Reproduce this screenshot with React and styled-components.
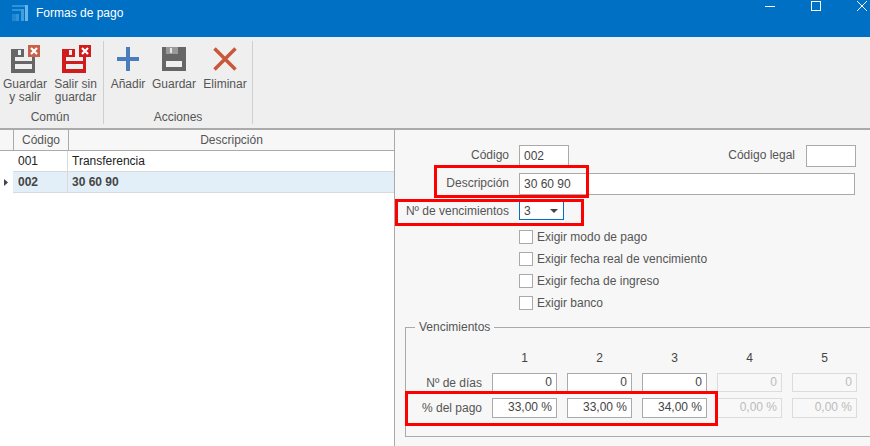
import React from "react";
import styled, { createGlobalStyle } from "styled-components";

const GlobalStyle = createGlobalStyle`
  html, body {
    margin: 0;
    padding: 0;
    overflow: hidden;
  }
  body {
    font-family: "Liberation Sans", Arial, sans-serif;
    font-size: 12px;
    color: #444;
  }
`;

const Page = styled.div`
  position: relative;
  width: 870px;
  height: 446px;
  display: flex;
  flex-direction: column;
  overflow: hidden;
`;

const TitleBar = styled.div`
  height: 37px;
  flex: none;
  display: flex;
  align-items: flex-start;
  background: #0070c4;
  color: #fff;
`;

const AppIcon = styled.svg`
  margin: 5px 0 0 12px;
  flex: none;
`;

const TitleText = styled.div`
  margin: 6px 0 0 8px;
  flex: 1;
  line-height: 14px;
`;

const WinIcon = styled.svg`
  flex: none;
  display: block;
  margin-right: ${({ $mr }) => $mr}px;
`;

const Ribbon = styled.div`
  height: 91px;
  flex: none;
  display: flex;
  align-items: stretch;
  background: #efefef;
  border-bottom: 2px solid #aaa;
`;

const Group = styled.div`
  width: ${({ $w }) => $w}px;
  margin-top: 4px;
  margin-bottom: 4px;
  border-right: 1px solid #cfcfcf;
  display: flex;
  flex-direction: column;
  box-sizing: border-box;
`;

const GroupButtons = styled.div`
  flex: 1;
  display: flex;
`;

const GroupLabel = styled.div`
  height: 14px;
  line-height: 14px;
  text-align: center;
  color: #555;
  padding-right: ${({ $pr }) => $pr || 0}px;
`;

const RibbonButton = styled.div`
  width: ${({ $w }) => $w}px;
  flex: none;
  display: flex;
  flex-direction: column;
  align-items: center;
  padding-top: 4px;
  text-align: center;
  line-height: 12.5px;
  color: #555;
`;

const ButtonIcon = styled.svg`
  display: block;
  margin-bottom: 5px;
  margin-left: ${({ $ml }) => $ml || 0}px;
`;

const Body = styled.div`
  flex: 1;
  display: flex;
  min-height: 0;
`;

const GridPane = styled.div`
  width: 395px;
  flex: none;
  box-sizing: border-box;
  background: #fff;
  border-right: 1px solid #aaa;
`;

const GridRow = styled.div`
  display: grid;
  grid-template-columns: 13px 55px 1fr;
  height: 21px;
  box-sizing: border-box;
  background: ${({ $head }) => ($head ? "#f7f7f7" : "#fff")};
  border-bottom: ${({ $head }) => ($head ? "1px solid #aaa" : "none")};
`;

const Selector = styled.div`
  display: flex;
  align-items: center;
  padding-left: 4px;
`;

const HeadCell = styled.div`
  border-left: 1px solid #aaa;
  text-align: center;
  line-height: 20px;
  color: #555;
`;

const Cell = styled.div`
  padding-left: ${({ $first }) => ($first ? 5 : 4)}px;
  border-right: ${({ $first }) => ($first ? "1px solid #d9d9d9" : "none")};
  border-bottom: 1px solid #d9d9d9;
  background: ${({ $selected }) => ($selected ? "#e3eff8" : "#fff")};
  font-weight: ${({ $selected }) => ($selected ? 700 : 400)};
  color: ${({ $selected }) => ($selected ? "#444" : "#222")};
  line-height: 20px;
`;

const FormPane = styled.div`
  flex: 1;
  min-width: 0;
  background: #f7f7f7;
  padding-top: 15px;
  display: flex;
  flex-direction: column;
`;

const FormRow = styled.div`
  display: flex;
  align-items: center;
  height: ${({ $h }) => $h || 22}px;
  margin-bottom: ${({ $mb }) => $mb}px;
`;

const Label = styled.label`
  width: 114px;
  flex: none;
  text-align: right;
  color: #555;
  margin-right: 10px;
  padding-bottom: ${({ $pb }) => $pb || 0}px;
`;

const TextBox = styled.div`
  width: ${({ $w }) => $w}px;
  height: 22px;
  flex: none;
  box-sizing: border-box;
  background: #fff;
  border: 1px solid #aaa;
  margin-right: ${({ $mr }) => $mr || 0}px;
  padding-left: 4px;
  line-height: 21px;
  color: #444;
`;

const LegalLabel = styled.label`
  margin-left: auto;
  margin-right: 11px;
  color: #555;
  padding-bottom: 2px;
`;

const Combo = styled.div`
  width: 45px;
  height: 19px;
  box-sizing: border-box;
  background: #fff;
  border: 1px solid #0070c4;
  padding: 0 5px 0 4px;
  display: flex;
  align-items: center;
  justify-content: space-between;
  color: #444;
`;

const ComboArrow = styled.span`
  width: 0;
  height: 0;
  border-left: 4px solid transparent;
  border-right: 4px solid transparent;
  border-top: 4px solid #444;
`;

const CheckList = styled.div`
  display: flex;
  flex-direction: column;
  gap: 8px;
  padding-left: 124px;
  margin-top: 10px;
`;

const CheckRow = styled.div`
  display: flex;
  align-items: center;
  height: 14px;
  color: #555;
`;

const CheckBox = styled.span`
  width: 14px;
  height: 14px;
  box-sizing: border-box;
  flex: none;
  background: #fff;
  border: 1px solid #aaa;
  margin-right: 4px;
`;

const DueFieldset = styled.fieldset`
  margin: 10px -2px 0 10px;
  padding: 0;
  height: 117px;
  box-sizing: border-box;
  border: 1px solid #aaa;
  min-width: 0;

  legend {
    margin-left: 9px;
    padding: 0 4px;
    color: #555;
    line-height: 14px;
  }
`;

const DueGrid = styled.div`
  display: grid;
  grid-template-columns: 76px repeat(5, 65px);
  column-gap: 10px;
  grid-template-rows: 18px 19px 20px;
  row-gap: 6px;
  margin-top: 15px;
  align-items: center;
`;

const ColHead = styled.div`
  text-align: center;
  color: #444;
  line-height: 18px;
`;

const RowHead = styled.div`
  text-align: right;
  color: #555;
`;

const NumBox = styled.div`
  height: 100%;
  box-sizing: border-box;
  background: ${({ $off }) => ($off ? "#f8f8f8" : "#fff")};
  border: 1px solid ${({ $off }) => ($off ? "#dcdcdc" : "#aaa")};
  color: ${({ $off }) => ($off ? "#bbb" : "#444")};
  text-align: right;
  padding-right: 4px;
  line-height: 17px;
`;

const Callout = styled.div`
  position: absolute;
  left: ${({ $x }) => $x}px;
  top: ${({ $y }) => $y}px;
  width: ${({ $w }) => $w}px;
  height: ${({ $h }) => $h}px;
  box-sizing: border-box;
  border: 3px solid #f00;
  pointer-events: none;
`;

function BadgeSave({ color, badgeColor, shift }) {
  return (
    <ButtonIcon $ml={shift} width="30" height="28" viewBox="0 0 30 28">
      <path
        fill={color}
        fillRule="evenodd"
        d="M1 4H14V12H5V16H22V12H25V28H1ZM5 19H22V24H5ZM8 5H11V10H8Z"
      />
      <rect x="18" y="0" width="12" height="12" fill={badgeColor} />
      <path d="M21 3L27 9M27 3L21 9" stroke="#fff" strokeWidth="2.200" />
    </ButtonIcon>
  );
}

function SaveIcon() {
  return (
    <ButtonIcon width="24" height="28" viewBox="0 0 24 28">
      <path fill="#666" fillRule="evenodd" d="M0 2H24V26H0ZM4 16H20V22H4Z" />
      <rect x="4" y="2" width="12" height="7" fill="#999" />
      <rect x="8" y="3" width="2" height="5" fill="#e6e6e6" />
    </ButtonIcon>
  );
}

const checks = [
  "Exigir modo de pago",
  "Exigir fecha real de vencimiento",
  "Exigir fecha de ingreso",
  "Exigir banco",
];

const columns = [
  { day: "0", pct: "33,00 %" },
  { day: "0", pct: "33,00 %" },
  { day: "0", pct: "34,00 %" },
  { day: "0", pct: "0,00 %", off: true },
  { day: "0", pct: "0,00 %", off: true },
];

function App() {
  return (
    <Page>
      <GlobalStyle />
      <TitleBar>
        <AppIcon width="16" height="16" viewBox="0 0 16 16">
          <rect x="0" y="0" width="13" height="2" fill="#2f93d8" />
          <rect x="0" y="4" width="9" height="2" fill="#2f93d8" />
          <rect x="0" y="9" width="4" height="7" fill="#1f86cf" />
          <rect x="4" y="9" width="3" height="7" fill="#2f93d8" />
          <rect x="9" y="4" width="3" height="12" fill="#3f9fdd" />
          <rect x="13" y="0" width="3" height="16" fill="#6bb5e6" />
        </AppIcon>
        <TitleText>Formas de pago</TitleText>
        <WinIcon $mr={36} width="10" height="12" viewBox="0 0 10 12">
          <path d="M0 6.500H10" stroke="#fff" />
        </WinIcon>
        <WinIcon $mr={36} width="10" height="12" viewBox="0 0 10 12">
          <rect x="0.500" y="1.500" width="9" height="9" fill="none" stroke="#fff" />
        </WinIcon>
        <WinIcon $mr={3} width="10" height="12" viewBox="0 0 10 12">
          <path d="M0 1L10 11M10 1L0 11" stroke="#fff" />
        </WinIcon>
      </TitleBar>

      <Ribbon>
        <Group $w={104}>
          <GroupButtons>
            <RibbonButton $w={50}>
              <BadgeSave color="#666" badgeColor="#c8604a" />
              Guardar
              <br />y salir
            </RibbonButton>
            <RibbonButton $w={51}>
              <BadgeSave color="#d01c1c" badgeColor="#d01c1c" shift={1} />
              Salir sin
              <br />
              guardar
            </RibbonButton>
          </GroupButtons>
          <GroupLabel $pr={3}>Común</GroupLabel>
        </Group>
        <Group $w={149}>
          <GroupButtons>
            <RibbonButton $w={48}>
              <ButtonIcon width="24" height="28" viewBox="0 0 24 28">
                <path d="M12 2V26M1 14H23" stroke="#4a7ebb" strokeWidth="4" fill="none" />
              </ButtonIcon>
              Añadir
            </RibbonButton>
            <RibbonButton $w={44}>
              <SaveIcon />
              Guardar
            </RibbonButton>
            <RibbonButton $w={58}>
              <ButtonIcon width="24" height="28" viewBox="0 0 24 28">
                <path d="M1.500 3.500L22.500 24.500M22.500 3.500L1.500 24.500" stroke="#c8583a" strokeWidth="3.500" fill="none" />
              </ButtonIcon>
              Eliminar
            </RibbonButton>
          </GroupButtons>
          <GroupLabel>Acciones</GroupLabel>
        </Group>
      </Ribbon>

      <Body>
        <GridPane>
          <GridRow $head>
            <Selector />
            <HeadCell>Código</HeadCell>
            <HeadCell>Descripción</HeadCell>
          </GridRow>
          <GridRow>
            <Selector />
            <Cell $first>001</Cell>
            <Cell>Transferencia</Cell>
          </GridRow>
          <GridRow>
            <Selector>
              <svg width="4" height="7" viewBox="0 0 4 7">
                <path d="M0 0L4 3.500L0 7Z" fill="#444" />
              </svg>
            </Selector>
            <Cell $first $selected>
              002
            </Cell>
            <Cell $selected>30 60 90</Cell>
          </GridRow>
        </GridPane>

        <FormPane>
          <FormRow $mb={6}>
            <Label $pb={2}>Código</Label>
            <TextBox $w={50}>002</TextBox>
            <LegalLabel>Código legal</LegalLabel>
            <TextBox $w={50} $mr={14} />
          </FormRow>
          <FormRow $mb={6}>
            <Label $pb={2}>Descripción</Label>
            <TextBox $w={336}>30 60 90</TextBox>
          </FormRow>
          <FormRow $mb={0} $h={19}>
            <Label>Nº de vencimientos</Label>
            <Combo>
              3
              <ComboArrow />
            </Combo>
          </FormRow>
          <CheckList>
            {checks.map((text) => (
              <CheckRow key={text}>
                <CheckBox />
                {text}
              </CheckRow>
            ))}
          </CheckList>
          <DueFieldset>
            <legend>Vencimientos</legend>
            <DueGrid>
              <span />
              {columns.map((col, i) => (
                <ColHead key={i}>{i + 1}</ColHead>
              ))}
              <RowHead>Nº de días</RowHead>
              {columns.map((col, i) => (
                <NumBox key={i} $off={col.off}>
                  {col.day}
                </NumBox>
              ))}
              <RowHead>% del pago</RowHead>
              {columns.map((col, i) => (
                <NumBox key={i} $off={col.off}>
                  {col.pct}
                </NumBox>
              ))}
            </DueGrid>
          </DueFieldset>
        </FormPane>
      </Body>

      <Callout $x={434} $y={165} $w={155} $h={33} />
      <Callout $x={395} $y={199} $w={189} $h={27} />
      <Callout $x={405} $y={391} $w={313} $h={35} />
    </Page>
  );
}

export default App;
